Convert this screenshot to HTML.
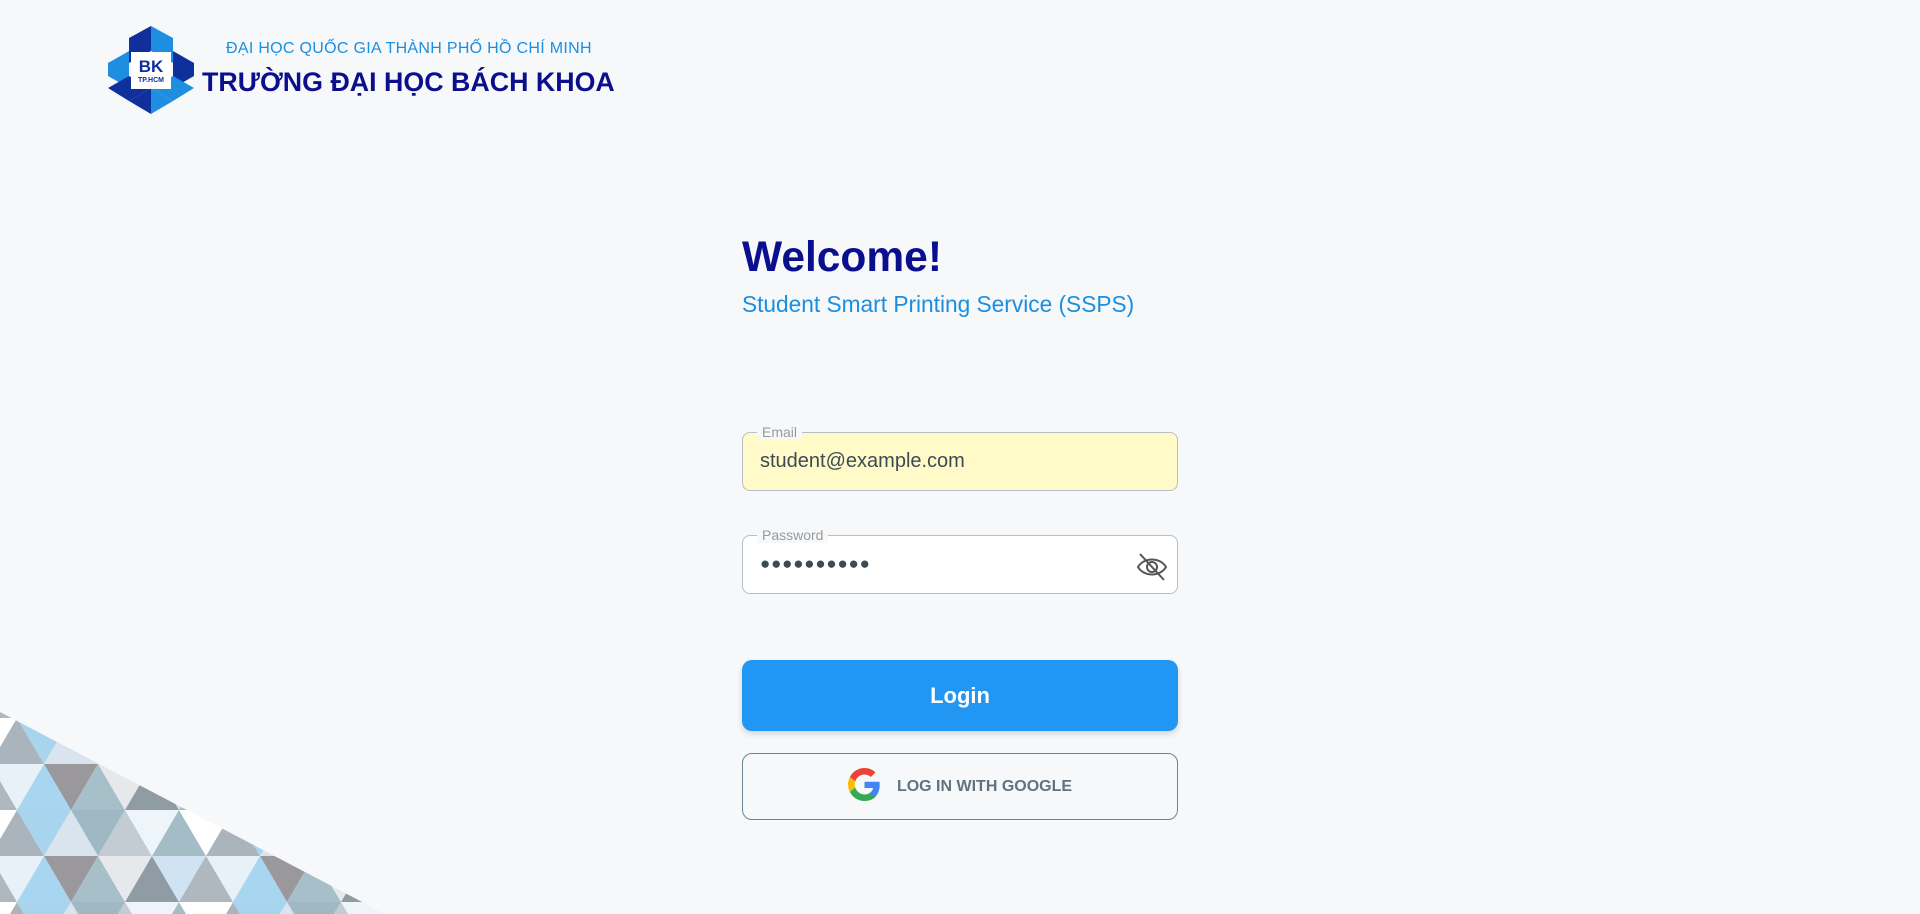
<!DOCTYPE html>
<html><head><meta charset="utf-8"><style>
*{box-sizing:border-box;margin:0;padding:0}
body{width:1920px;height:914px;background:#f7f8fa;font-family:"Liberation Sans",sans-serif;position:relative;overflow:hidden}
.abs{position:absolute}
.t1{left:226px;top:40px;font-size:16px;color:#1b8ee0;letter-spacing:0.3px;white-space:nowrap}
.t2{left:202px;top:67px;font-size:26.8px;font-weight:bold;color:#0b0f8c;white-space:nowrap}
.wel{left:742px;top:234px;font-size:42.5px;font-weight:bold;color:#0a0f8e}
.sub{left:742px;top:291px;font-size:22.7px;color:#1b8ee0}
.field{left:742px;width:436px;height:59px;border:1px solid #b5bfc6;border-radius:8px}
.lbl{position:absolute;top:-9px;left:14px;padding:0 5px;font-size:14px;color:#9a9a9a;background:#f7f8fa;line-height:16px}
.val{position:absolute;left:17px;top:16px;font-size:20px;color:#3d4b55}
.btn{left:742px;width:436px;border-radius:10px;text-align:center}
</style></head><body>
<svg class="abs" style="left:108px;top:26px" width="86" height="88" viewBox="0 0 86 88">
<polygon points="21,12 43,0 43,25 21,37" fill="#0f2f9c"/>
<polygon points="43,0 65,12 65,37 43,25" fill="#1e8fe0"/>
<polygon points="0,37 21,25 21,62 0,50" fill="#1e8fe0"/>
<polygon points="65,25 86,37 86,50 65,62" fill="#0f2f9c"/>
<polygon points="0,62 21,50 43,62 21,75" fill="#0f2f9c"/>
<polygon points="21,75 43,62 43,62 43,88" fill="#0f2f9c"/>
<polygon points="43,62 65,50 86,62 65,75" fill="#1e8fe0"/>
<polygon points="43,62 65,75 43,88" fill="#1e8fe0"/>
<rect x="23" y="26" width="40" height="37" fill="#fff"/>
<text x="43" y="46" text-anchor="middle" font-family="Liberation Sans" font-weight="bold" font-size="17" fill="#0f2f9c">BK</text>
<text x="43" y="56" text-anchor="middle" font-family="Liberation Sans" font-weight="bold" font-size="7" fill="#0f2f9c">TP.HCM</text>
</svg>
<div class="abs t1">ĐẠI HỌC QUỐC GIA THÀNH PHỐ HỒ CHÍ MINH</div>
<div class="abs t2">TRƯỜNG ĐẠI HỌC BÁCH KHOA</div>
<div class="abs wel">Welcome!</div>
<div class="abs sub">Student Smart Printing Service (SSPS)</div>
<div class="abs field" style="top:432px;background:#fffac8"><span class="lbl">Email</span><span class="val" style="top:17px">student@example.com</span></div>
<div class="abs field" style="top:535px;background:#fff"><span class="lbl">Password</span><span class="val" style="top:18px;font-size:17px;letter-spacing:0.8px">●●●●●●●●●●</span>
<svg style="position:absolute;left:393px;top:17px" width="32" height="28" viewBox="0 0 32 28"><path d="M2 14 C8 4 24 4 30 14 C24 24 8 24 2 14Z" fill="none" stroke="#555" stroke-width="2"/><circle cx="16" cy="14" r="5" fill="none" stroke="#555" stroke-width="2"/><line x1="4" y1="1" x2="28" y2="27" stroke="#555" stroke-width="2"/></svg></div>
<div class="abs btn" style="top:660px;height:71px;background:#2196f3;color:#fff;font-weight:bold;font-size:22px;line-height:71px;box-shadow:0 3px 6px rgba(0,0,0,0.15)">Login</div>
<div class="abs btn" style="top:753px;height:67px;border:1px solid #6a8594;color:#5f7480;font-weight:bold;font-size:16px;line-height:65px"><svg style="vertical-align:middle;margin-right:16px;margin-top:-4px" width="33" height="33" viewBox="0 0 48 48"><path fill="#EA4335" d="M24 9.5c3.5 0 6.6 1.2 9.1 3.6l6.8-6.8C35.8 2.4 30.3 0 24 0 14.6 0 6.6 5.4 2.7 13.3l7.9 6.1C12.5 13.6 17.8 9.5 24 9.5z"/><path fill="#4285F4" d="M46.1 24.5c0-1.6-.1-3.1-.4-4.5H24v9h12.4c-.5 2.9-2.2 5.4-4.7 7.1l7.7 6c4.5-4.2 6.7-10.3 6.7-17.6z"/><path fill="#FBBC05" d="M10.5 28.6c-.5-1.4-.8-3-.8-4.6s.3-3.2.8-4.6l-7.9-6.1C1 16.6 0 20.2 0 24s1 7.4 2.7 10.7l7.8-6.1z"/><path fill="#34A853" d="M24 48c6.5 0 11.9-2.1 15.9-5.8l-7.7-6c-2.2 1.5-5 2.3-8.2 2.3-6.2 0-11.5-4.1-13.4-9.9l-7.9 6.1C6.6 42.6 14.6 48 24 48z"/></svg>LOG IN WITH GOOGLE</div>
<svg class="abs" style="left:0;top:700px" width="400" height="214" viewBox="0 0 400 214">
<defs>
<pattern id="p" width="216" height="92" patternUnits="userSpaceOnUse" x="-10" y="18">
<polygon points="0,46 27,0 54,46" fill="#a9b4bc"/>
<polygon points="27,0 81,0 54,46" fill="#a8d4ee"/>
<polygon points="54,46 81,0 108,46" fill="#d9e4ee"/>
<polygon points="81,0 135,0 108,46" fill="#9fb8c4"/>
<polygon points="108,46 135,0 162,46" fill="#c3ccd3"/>
<polygon points="135,0 189,0 162,46" fill="#eef5fa"/>
<polygon points="162,46 189,0 216,46" fill="#a3bcc6"/>
<polygon points="189,0 243,0 216,46" fill="#ffffff"/>
<polygon points="-27,0 27,0 0,46" fill="#ffffff"/>
<polygon points="0,46 54,46 27,92" fill="#e8f1f8"/>
<polygon points="27,92 54,46 81,92" fill="#a8d6f0"/>
<polygon points="54,46 108,46 81,92" fill="#9a989c"/>
<polygon points="81,92 108,46 135,92" fill="#a6bfc9"/>
<polygon points="108,46 162,46 135,92" fill="#e6e8eb"/>
<polygon points="135,92 162,46 189,92" fill="#8f9ca4"/>
<polygon points="162,46 216,46 189,92" fill="#cfe3f2"/>
<polygon points="189,92 216,46 243,92" fill="#b0b8bf"/>
<polygon points="-27,92 0,46 27,92" fill="#b0b8bf"/>
</pattern>
<clipPath id="c"><polygon points="0,12 385,214 0,214"/></clipPath>
</defs>
<rect width="400" height="214" fill="url(#p)" clip-path="url(#c)"/>
</svg>
</body></html>
